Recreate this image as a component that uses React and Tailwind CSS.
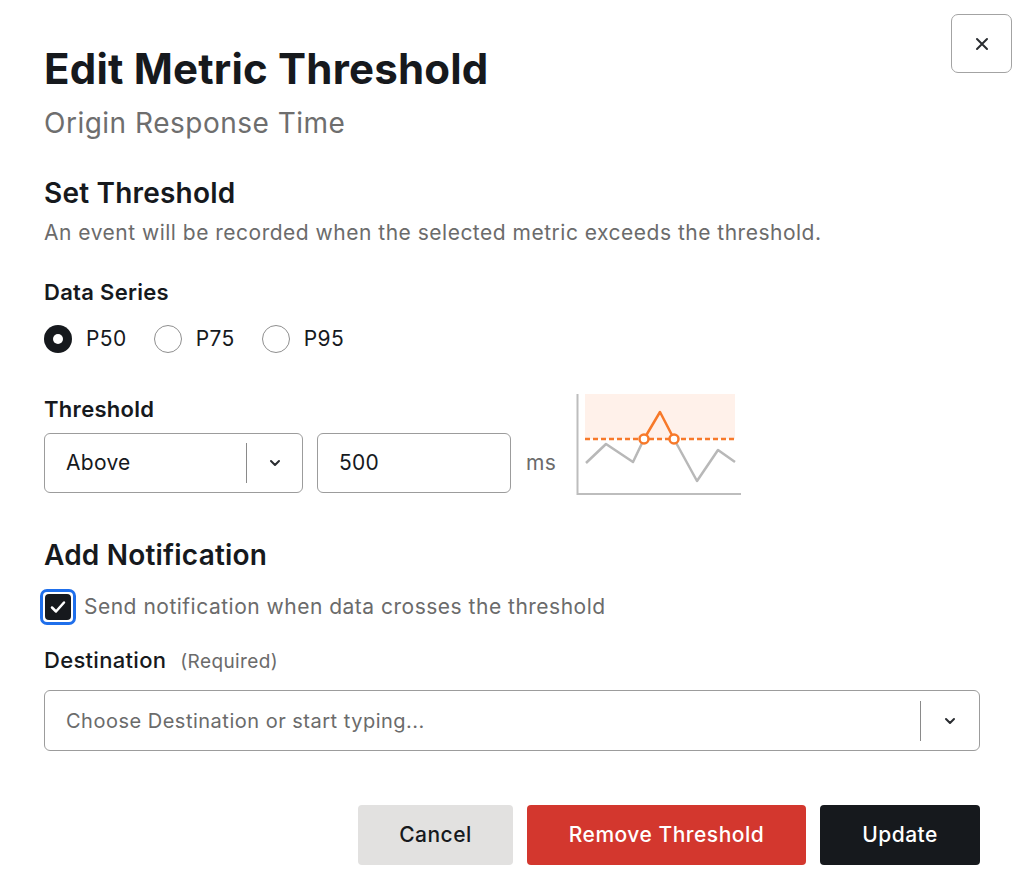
import React from 'react';

const Chevron = () => (
  <svg width="12" height="8" viewBox="0 0 12 8" fill="none" stroke="#2a2d31" strokeWidth="2" strokeLinecap="round" strokeLinejoin="round">
    <path d="M2 2l4 4 4-4" />
  </svg>
);

const Radio = ({ checked, label }) => (
  <label className="flex items-center gap-[14px]">
    {checked ? (
      <span className="w-[28px] h-[28px] rounded-full bg-[#16191d] flex items-center justify-center">
        <span className="w-[10px] h-[10px] rounded-full bg-white" />
      </span>
    ) : (
      <span className="w-[28px] h-[28px] rounded-full border-[1.5px] border-[#8f8f8f] bg-white" />
    )}
    <span className="text-[21px] tracking-[0.4px] text-[#16191d]">{label}</span>
  </label>
);

const ThresholdChart = () => (
  <svg width="165" height="102" viewBox="0 0 165 102" className="mb-[-2px]">
    <rect x="9" y="1" width="150" height="45" fill="#fff1ea" />
    <path d="M1.5 1V101H165" fill="none" stroke="#bdbdbd" strokeWidth="2" />
    <path d="M9 46H159" stroke="#f7792a" strokeWidth="2.5" strokeDasharray="5 3" />
    <polyline points="10,70 30,51 57,69 68,46" fill="none" stroke="#b8b8b8" strokeWidth="2.5" strokeLinejoin="round" />
    <polyline points="98,46 121,88 142,57 159,69" fill="none" stroke="#b8b8b8" strokeWidth="2.5" strokeLinejoin="round" />
    <polyline points="68,46 84,19 98,46" fill="none" stroke="#f7792a" strokeWidth="2.5" strokeLinejoin="round" />
    <circle cx="68" cy="46" r="4.5" fill="#fff" stroke="#f7792a" strokeWidth="2.5" />
    <circle cx="98" cy="46" r="4.5" fill="#fff" stroke="#f7792a" strokeWidth="2.5" />
  </svg>
);

export default function App() {
  return (
    <div className="relative min-h-[882px] bg-white px-[44px] pt-[46px] text-[#16191d]" style={{ fontFamily: 'Inter, "Liberation Sans", sans-serif' }}>
      <button className="absolute top-[14px] right-[12px] w-[61px] h-[59px] rounded-[7px] border border-[#a3a3a3] flex items-center justify-center bg-white">
        <svg width="14" height="14" viewBox="0 0 14 14" stroke="#2a2d31" strokeWidth="2" strokeLinecap="round">
          <path d="M2 2l10 10M12 2L2 12" />
        </svg>
      </button>

      <h1 className="text-[42px] leading-[46px] font-bold tracking-[0.2px]">Edit Metric Threshold</h1>
      <p className="mt-[14px] text-[28px] leading-[34px] tracking-[0.5px] text-[#6e6e6e]">Origin Response Time</p>

      <h2 className="mt-[37px] text-[28px] leading-[32px] font-semibold tracking-[0.2px]">Set Threshold</h2>
      <p className="mt-[11px] text-[21px] leading-[26px] tracking-[0.5px] text-[#6b6b6b]">An event will be recorded when the selected metric exceeds the threshold.</p>

      <div className="mt-[33px] text-[22px] leading-[26px] font-semibold tracking-[0.3px]">Data Series</div>
      <div className="mt-[18px] flex items-center gap-[27px]">
        <Radio checked label="P50" />
        <Radio label="P75" />
        <Radio label="P95" />
      </div>

      <div className="mt-[38px] flex items-end">
        <div>
          <div className="text-[22px] leading-[26px] font-semibold tracking-[0.3px]">Threshold</div>
          <div className="mt-[11px] flex gap-[14px]">
            <div className="w-[259px] h-[60px] rounded-[6px] border border-[#9c9c9c] flex items-center pl-[21px]">
              <span className="flex-1 text-[21px] tracking-[0.3px]">Above</span>
              <span className="w-px h-[40px] bg-[#8a8a8a]" />
              <span className="w-[55px] flex justify-center"><Chevron /></span>
            </div>
            <div className="w-[194px] h-[60px] rounded-[6px] border border-[#9c9c9c] flex items-center pl-[21px] text-[21px] tracking-[0.3px]">500</div>
          </div>
        </div>
        <div className="h-[60px] flex items-center ml-[15px] text-[21px] tracking-[0.4px] text-[#6b6b6b]">ms</div>
        <div className="ml-[20px]">
          <ThresholdChart />
        </div>
      </div>

      <h2 className="mt-[46px] text-[28px] leading-[32px] font-semibold tracking-[0.2px]">Add Notification</h2>
      <label className="mt-[18px] flex items-center gap-[8px] ml-[-4px]">
        <span className="w-[36px] h-[36px] rounded-[7px] border-[3px] border-[#1f6feb] flex items-center justify-center">
          <span className="w-[26px] h-[26px] rounded-[4px] bg-[#16191d] flex items-center justify-center">
            <svg width="16" height="14" viewBox="0 0 16 14" fill="none" stroke="#fff" strokeWidth="2.5" strokeLinecap="round" strokeLinejoin="round">
              <path d="M2 7.5l4 4L14 2.5" />
            </svg>
          </span>
        </span>
        <span className="text-[21px] tracking-[0.5px] text-[#6b6b6b]">Send notification when data crosses the threshold</span>
      </label>

      <div className="mt-[22px] flex items-baseline gap-[14px]">
        <span className="text-[22px] leading-[26px] font-medium tracking-[0.3px]">Destination</span>
        <span className="text-[19px] tracking-[0.4px] text-[#6b6b6b]">(Required)</span>
      </div>
      <div className="mt-[14px] w-[936px] h-[61px] rounded-[6px] border border-[#9c9c9c] flex items-center pl-[21px]">
        <span className="flex-1 text-[20px] tracking-[0.5px] text-[#6b6b6b]">Choose Destination or start typing...</span>
        <span className="w-px h-[40px] bg-[#8a8a8a]" />
        <span className="w-[58px] flex justify-center"><Chevron /></span>
      </div>

      <div className="mt-[54px] w-[936px] flex justify-end gap-[14px]">
        <button className="w-[155px] h-[60px] rounded-[4px] bg-[#e2e1e0] text-[21px] font-medium tracking-[0.5px] text-[#16191d]">Cancel</button>
        <button className="w-[279px] h-[60px] rounded-[4px] bg-[#d3372e] text-[21px] font-medium tracking-[0.5px] text-white">Remove Threshold</button>
        <button className="w-[160px] h-[60px] rounded-[4px] bg-[#16191d] text-[21px] font-medium tracking-[0.5px] text-white">Update</button>
      </div>
    </div>
  );
}
